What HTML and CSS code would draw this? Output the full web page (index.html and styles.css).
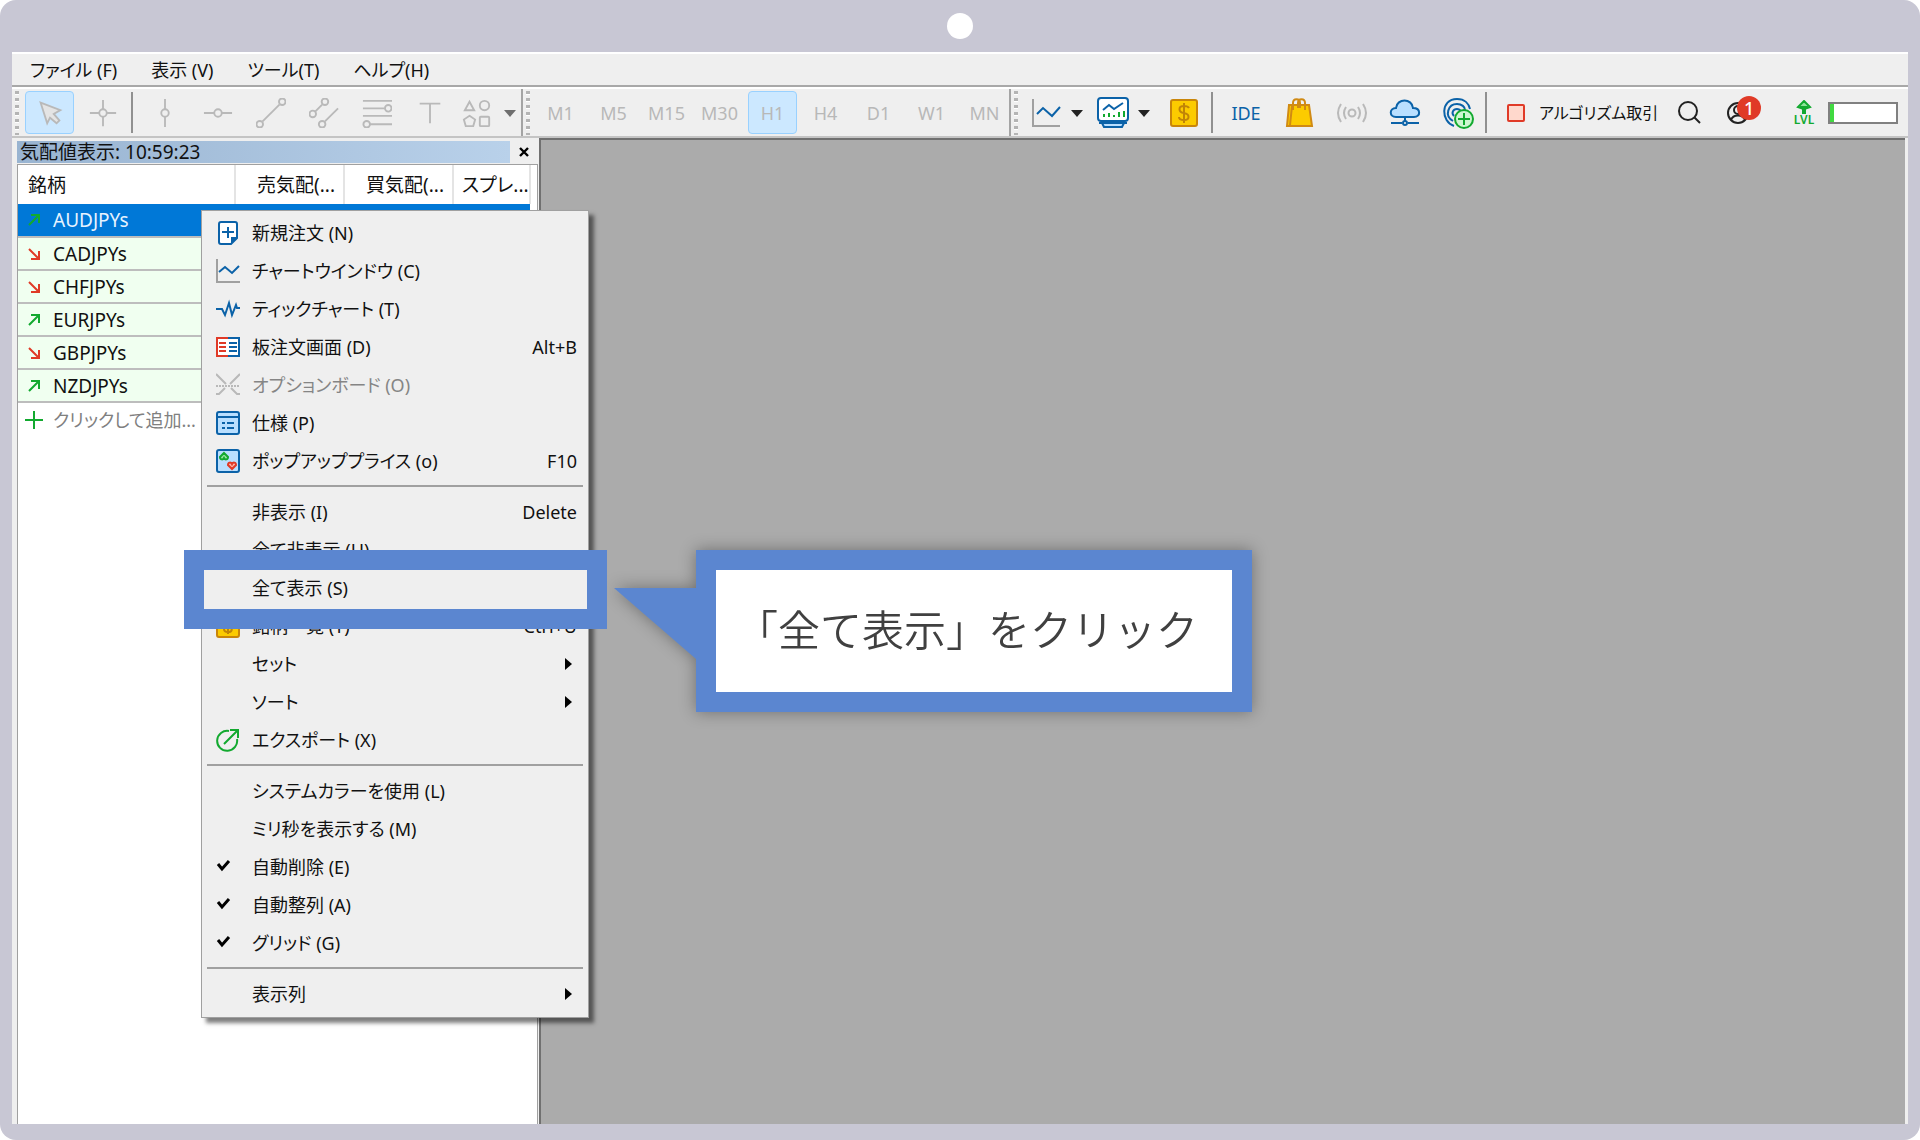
FILE: index.html
```html
<!DOCTYPE html>
<html lang="ja">
<head>
<meta charset="utf-8">
<title>気配値表示</title>
<meta name="viewport" content="width=device-width, initial-scale=1">
<link rel="stylesheet" href="styles.css">
</head>
<body>
<div class="frame">
  <div class="frame-top"><span class="camera"></span></div>
  <div class="window">
    <nav class="menubar">
      <button class="menubar-item">ファイル (F)</button>
      <button class="menubar-item">表示 (V)</button>
      <button class="menubar-item">ツール(T)</button>
      <button class="menubar-item">ヘルプ(H)</button>
    </nav>
    <div class="toolbar">
      <div class="group drawing">
        <span class="grip"></span>
        <button class="tool active" aria-label="カーソル"><svg class="icon dim" viewBox="0 0 32 32"><path fill="#e4e4e4" d="M6 5l21 8-7 4 6 7-3 3-7-6-3 6z"/></svg></button>
        <button class="tool" aria-label="十字線"><svg class="icon dim" viewBox="0 0 32 32"><path d="M16 2v10M16 20v10M2 16h10M20 16h10"/><circle cx="16" cy="16" r="4"/></svg></button>
        <span class="rule"></span>
        <button class="tool" aria-label="垂直線"><svg class="icon dim" viewBox="0 0 32 32"><path d="M16 1v11M16 20v11"/><circle cx="16" cy="16" r="4"/></svg></button>
        <button class="tool" aria-label="水平線"><svg class="icon dim" viewBox="0 0 32 32"><path d="M1 16h11M20 16h11"/><circle cx="16" cy="16" r="4"/></svg></button>
        <button class="tool" aria-label="トレンドライン"><svg class="icon dim" viewBox="0 0 32 32"><path d="M7 25L25 7"/><circle cx="4" cy="28" r="3.5"/><circle cx="28" cy="4" r="3.5"/></svg></button>
        <button class="tool" aria-label="チャネル"><svg class="icon dim" viewBox="0 0 32 32"><path d="M6 15L14 7M17 25L31 11"/><circle cx="4" cy="17" r="3.5"/><circle cx="17" cy="4" r="3.5"/><circle cx="14" cy="28" r="3.5"/></svg></button>
        <button class="tool" aria-label="フィボナッチ"><svg class="icon dim" viewBox="0 0 32 32"><path d="M1 3h31M1 11h23M1 19h31M8 28h24"/><circle cx="28" cy="11" r="3.5"/><circle cx="5" cy="28" r="3.5"/></svg></button>
        <button class="tool" aria-label="テキスト"><svg class="icon dim" viewBox="0 0 32 32"><path d="M5 6h22M16 6v21"/></svg></button>
        <button class="tool shapes" aria-label="図形"><svg class="icon dim" viewBox="0 0 32 32"><path d="M8 4l5 9H3z"/><circle cx="24" cy="8" r="5"/><path d="M8 19l6 4-2 7H4l-2-7z"/><rect x="19" y="20" width="10" height="10" rx="1"/></svg><svg class="caret" viewBox="0 0 12 8"><path fill="#6e6e6e" d="M0 1h12L6 8z"/></svg></button>
      </div>
      <div class="group frames">
        <span class="grip"></span>
        <button class="tool">M1</button>
        <button class="tool">M5</button>
        <button class="tool">M15</button>
        <button class="tool">M30</button>
        <button class="tool active">H1</button>
        <button class="tool">H4</button>
        <button class="tool">D1</button>
        <button class="tool">W1</button>
        <button class="tool">MN</button>
      </div>
      <div class="group actions">
        <span class="grip"></span>
        <button class="pair" aria-label="ラインチャート"><svg class="icon" viewBox="0 0 32 32"><path class="axis" d="M3 2v27h27"/><path class="blue" d="M7 17l6-6 9 8 8-9"/></svg><svg class="caret" viewBox="0 0 12 8"><path fill="#222" d="M0 1h12L6 8z"/></svg></button>
        <button class="pair" aria-label="インジケータ"><svg class="icon" viewBox="0 0 32 32"><rect class="blue" x="1" y="1" width="30" height="23" rx="3" fill="#fff"/><path class="blue" d="M2 26h28M5 26l2 4h18l2-4" fill="#b9dfff"/><path class="blue" d="M6 13l6-5 5 4 9-6"/><path d="M7 20v-3M12 20v-4M17 20v-2M22 20v-5M27 20v-6" stroke="#12a92f" stroke-width="2"/></svg><svg class="caret" viewBox="0 0 12 8"><path fill="#222" d="M0 1h12L6 8z"/></svg></button>
        <button class="single symbols" aria-label="銘柄"><svg class="icon" viewBox="0 0 32 32"><rect x="3" y="3" width="26" height="26" rx="2" fill="#fccb00" stroke="#c9860a" stroke-width="2"/><path d="M21 11c-1-2-3-2-5-2-6 0-6 6 0 7s6 7 0 7c-3 0-5-1-5-3M16 6v20" fill="none" stroke="#c08407" stroke-width="2"/></svg></button>
        <span class="rule"></span>
        <div class="services">
          <button class="single ide">IDE</button>
          <button class="single" aria-label="マーケット"><svg class="icon" viewBox="0 0 32 32"><path d="M6 8h20l3 21H4z" fill="#fccb00" stroke="#d08a14" stroke-width="2"/><path d="M9 9L7 28M10 13V6c0-5 7-5 7 0v5M15 11V6c0-5 7-5 7 0v7" fill="none" stroke="#d08a14" stroke-width="2"/></svg></button>
          <button class="single" aria-label="シグナル"><svg class="icon dim" viewBox="0 0 32 32"><circle cx="16" cy="16" r="3.5"/><path d="M10 10q-4 6 0 12M22 10q4 6 0 12M5 7q-6 9 0 18M27 7q6 9 0 18"/></svg></button>
          <button class="single" aria-label="VPS"><svg class="icon" viewBox="0 0 32 32"><path class="blue" fill="#b9dfff" d="M7 20c-7 0-7-9 0-9 1-10 16-10 17 0 8 0 8 9 1 9z"/><path class="blue" d="M16 20v4M2 26h11M19 26h11"/><circle class="blue" cx="16" cy="26" r="2"/></svg></button>
          <button class="single" aria-label="コピー"><svg class="icon" viewBox="0 0 32 32"><path class="blue" d="M12 29C-1 25-2 2 15 2c8 0 12 5 13 10M11 24C2 19 6 7 15 7c5 0 8 3 8 6M12 19c-3-3-1-7 3-7 2 0 3 1 4 2"/><circle cx="22" cy="22" r="9" fill="#cdf7d0" stroke="#12a92f" stroke-width="2"/><path d="M22 16v12M16 22h12" stroke="#12a92f" stroke-width="2"/></svg></button>
        </div>
        <span class="rule"></span>
        <button class="algo"><span class="stop"></span>アルゴリズム取引</button>
        <button class="single" aria-label="検索"><svg class="icon" viewBox="0 0 32 32"><circle cx="15" cy="14" r="9" fill="none" stroke="#222" stroke-width="2"/><path d="M21 20l6 6" stroke="#222" stroke-width="2"/></svg></button>
        <button class="single account" aria-label="アカウント"><svg class="icon" viewBox="0 0 32 32"><g fill="none" stroke="#222" stroke-width="2"><circle cx="14" cy="16" r="10"/><circle cx="14" cy="13" r="4"/><path d="M7 23c2-6 12-6 14 0"/></g></svg><span class="badge">1</span></button>
        <div class="level"><svg viewBox="0 0 16 14"><path d="M8 1l6 6-3 1V7H9v6H7V7H5v1L2 7z" fill="#8ee49a" stroke="#12a92f" stroke-width="2"/></svg><span>LVL</span></div>
        <div class="gauge"><span></span></div>
      </div>
    </div>
    <div class="workspace">
      <aside class="panel">
        <header class="panel-head"><h1 class="panel-title">気配値表示: 10:59:23</h1><button class="panel-close" aria-label="閉じる"><svg viewBox="0 0 10 10"><path d="M1 1l8 8M9 1L1 9" stroke="#000" stroke-width="2.4"/></svg></button></header>
        <div class="list">
          <table class="quotes">
            <colgroup><col class="c-name"><col class="c-price"><col class="c-price"><col class="c-spread"></colgroup>
            <thead><tr><th>銘柄</th><th>売気配(...</th><th>買気配(...</th><th>スプレ...</th></tr></thead>
            <tbody>
              <tr class="selected"><td><svg class="dir up" viewBox="0 0 14 14"><path d="M2 12L12 2M4 2h8v8"/></svg>AUDJPYs</td><td></td><td></td><td></td></tr>
              <tr><td><svg class="dir down" viewBox="0 0 14 14"><path d="M2 2l10 10M4 12h8V4"/></svg>CADJPYs</td><td></td><td></td><td></td></tr>
              <tr><td><svg class="dir down" viewBox="0 0 14 14"><path d="M2 2l10 10M4 12h8V4"/></svg>CHFJPYs</td><td></td><td></td><td></td></tr>
              <tr><td><svg class="dir up" viewBox="0 0 14 14"><path d="M2 12L12 2M4 2h8v8"/></svg>EURJPYs</td><td></td><td></td><td></td></tr>
              <tr><td><svg class="dir down" viewBox="0 0 14 14"><path d="M2 2l10 10M4 12h8V4"/></svg>GBPJPYs</td><td></td><td></td><td></td></tr>
              <tr><td><svg class="dir up" viewBox="0 0 14 14"><path d="M2 12L12 2M4 2h8v8"/></svg>NZDJPYs</td><td></td><td></td><td></td></tr>
            </tbody>
          </table>
          <button class="add"><svg viewBox="0 0 18 18"><path d="M9 0v18M0 9h18" stroke="#12a92f" stroke-width="2"/></svg>クリックして追加...</button>
        </div>
      </aside>
      <main class="charts"></main>
    </div>

    <div class="context" role="menu">
      <button class="item" role="menuitem"><svg class="mi" viewBox="0 0 24 24"><path class="blue" fill="#fff" d="M5 1h14a2 2 0 0 1 2 2v14l-6 6H5a2 2 0 0 1-2-2V3a2 2 0 0 1 2-2z"/><path d="M21 16v1l-6 6v-7z" fill="#0b62a8"/><path class="blue" d="M12 6v11M6 11h12"/></svg><span>新規注文 (N)</span></button>
      <button class="item" role="menuitem"><svg class="mi" viewBox="0 0 24 24"><path class="axis" d="M1 0v23h23"/><path class="blue" d="M3 13l6-5 7 6 7-7"/></svg><span>チャートウインドウ (C)</span></button>
      <button class="item" role="menuitem"><svg class="mi" viewBox="0 0 24 24"><path class="blue" d="M0 12h6l3 6 4-12 3 12 4-10 1 3h3"/></svg><span>ティックチャート (T)</span></button>
      <button class="item" role="menuitem"><svg class="mi" viewBox="0 0 24 24"><path d="M12 3H1v18h11" fill="#fff" stroke="#e03a27" stroke-width="2"/><path class="blue" d="M12 3h11v18H12" fill="#fff"/><path d="M3 8h7M3 12h7M3 16h7" stroke="#e03a27" stroke-width="2"/><path class="blue" d="M13 8h8M13 12h8M13 16h8"/></svg><span>板注文画面 (D)</span><kbd>Alt+B</kbd></button>
      <button class="item disabled" role="menuitem" disabled><svg class="mi dim" viewBox="0 0 24 24"><path d="M0 1l10 10M24 1L14 11M9 15l-6 6H0M15 15l6 6h3"/><path d="M0 13h24" stroke-dasharray="2 1"/></svg><span>オプションボード (O)</span></button>
      <button class="item" role="menuitem"><svg class="mi" viewBox="0 0 24 24"><rect class="blue" x="1" y="1" width="22" height="22" rx="2" fill="#b9dfff"/><path class="blue" d="M1 6h22M6 12h3M11 12h7M6 17h3M11 17h7"/></svg><span>仕様 (P)</span></button>
      <button class="item" role="menuitem"><svg class="mi" viewBox="0 0 24 24"><rect class="blue" x="1" y="1" width="22" height="22" rx="2" fill="#b9dfff"/><path d="M8 4l4 4c0 3-3 3-4 1-1 2-4 2-4-1z" fill="#9be8a4" stroke="#12a92f" stroke-width="2"/><path d="M16 20l-4-4c0-3 3-3 4-1 1-2 4-2 4 1z" fill="#ffb3a8" stroke="#e03a27" stroke-width="2"/></svg><span>ポップアッププライス (o)</span><kbd>F10</kbd></button>
      <hr>
      <button class="item" role="menuitem"><i class="mi"></i><span>非表示 (I)</span><kbd>Delete</kbd></button>
      <button class="item" role="menuitem"><i class="mi"></i><span>全て非表示 (H)</span></button>
      <button class="item marked" role="menuitem"><i class="mi"></i><span>全て表示 (S)</span></button>
      <button class="item" role="menuitem"><svg class="mi" viewBox="0 0 24 24"><rect x="1" y="1" width="22" height="22" rx="2" fill="#fccb00" stroke="#c9860a" stroke-width="2"/><path d="M16 8c-1-2-3-2-4-2-5 0-5 5 0 6s5 6 0 6c-2 0-4-1-4-3M12 4v16" fill="none" stroke="#c08407" stroke-width="2"/></svg><span>銘柄一覧 (Y)</span><kbd>Ctrl+U</kbd></button>
      <button class="item" role="menuitem"><i class="mi"></i><span>セット</span><svg class="sub" viewBox="0 0 7 12"><path d="M0 0l7 6-7 6z"/></svg></button>
      <button class="item" role="menuitem"><i class="mi"></i><span>ソート</span><svg class="sub" viewBox="0 0 7 12"><path d="M0 0l7 6-7 6z"/></svg></button>
      <button class="item" role="menuitem"><svg class="mi" viewBox="0 0 24 24"><path d="M13 3a10 10 0 1 0 8 8M8 16L22 2M14 2h8v8" fill="none" stroke="#12a92f" stroke-width="2"/></svg><span>エクスポート (X)</span></button>
      <hr>
      <button class="item" role="menuitem"><i class="mi"></i><span>システムカラーを使用 (L)</span></button>
      <button class="item" role="menuitem"><i class="mi"></i><span>ミリ秒を表示する (M)</span></button>
      <button class="item" role="menuitemcheckbox" aria-checked="true"><svg class="mi" viewBox="0 0 24 24"><path class="tick" d="M2 9l4 5 7-8"/></svg><span>自動削除 (E)</span></button>
      <button class="item" role="menuitemcheckbox" aria-checked="true"><svg class="mi" viewBox="0 0 24 24"><path class="tick" d="M2 9l4 5 7-8"/></svg><span>自動整列 (A)</span></button>
      <button class="item" role="menuitemcheckbox" aria-checked="true"><svg class="mi" viewBox="0 0 24 24"><path class="tick" d="M2 9l4 5 7-8"/></svg><span>グリッド (G)</span></button>
      <hr>
      <button class="item" role="menuitem"><i class="mi"></i><span>表示列</span><svg class="sub" viewBox="0 0 7 12"><path d="M0 0l7 6-7 6z"/></svg></button>
    </div>

    <div class="callout"><svg class="tail" viewBox="0 0 82 71"><path d="M0 0h82v71z" fill="#5b86d0"/></svg><p>「全て表示」をクリック</p></div>
  </div>
</div>
</body>
</html>
```

FILE: styles.css
```css
* { box-sizing: border-box; }
body { margin: 0; background: #fff; color: #111; font: 18px/24px "Noto Sans", "Noto Sans CJK JP", sans-serif; font-feature-settings: "palt"; }
button { margin: 0; padding: 0; border: 0; background: none; color: inherit; font: inherit; font-feature-settings: inherit; white-space: nowrap; }
svg { display: block; flex: none; }

.frame { display: flex; flex-direction: column; min-height: 100vh; padding: 0 12px 16px; background: #c8c7d4; border-radius: 16px; }
.frame-top { display: flex; justify-content: center; align-items: center; height: 52px; }
.camera { width: 26px; height: 26px; border-radius: 50%; background: #fff; }
.window { position: relative; flex: 1; display: flex; flex-direction: column; border-top: 2px solid #fff; background: #efefef; }

.menubar { display: flex; gap: 34px; height: 33px; padding: 0 18px; border-bottom: 2px solid #a8a8a8; }
.toolbar { display: flex; height: 51px; border-top: 2px solid #fff; border-bottom: 2px solid #c4c4c4; }
.group { display: flex; align-items: center; gap: 4px; border-right: 2px solid #a4a4a4; }
.grip { width: 4px; height: 44px; margin: 0 2px 0 3px; background: repeating-linear-gradient(#b4b4b4 0 3px, #fff 3px 4px, #efefef 4px 7px); }
.tool { display: flex; align-items: center; justify-content: center; width: 49px; height: 43px; border: 1px solid transparent; border-radius: 4px; color: #b8b8b8; }
.tool.active { background: #cce8ff; border-color: #99d1ff; }
.tool.shapes { width: 62px; gap: 12px; margin-right: 1px; }
.rule { width: 2px; height: 41px; background: #909090; }
.drawing .rule { margin-right: 3px; }
.icon { width: 32px; height: 32px; }
.tool .icon { width: 30px; height: 30px; }
.caret { width: 12px; height: 8px; }
.dim { fill: none; stroke: #b9b9b9; stroke-width: 2; }
.blue { stroke: #0b62a8; stroke-width: 2; }
.blue:not([fill]) { fill: none; }
.axis { fill: none; stroke: #a0a0a0; stroke-width: 2; }

.actions { flex: 1; gap: 0; border-right: 0; padding-right: 10px; }
.actions .grip { margin-right: 12px; }
.pair { display: flex; align-items: center; gap: 9px; margin-right: 14px; }
.symbols { margin-left: 4px; }
.single { display: flex; align-items: center; justify-content: center; width: 32px; height: 40px; }
.actions .rule { margin: 0 13px 0 11px; }
.services { display: flex; gap: 21px; padding-left: 4px; }
.ide { color: #0b62a8; }
.algo { display: flex; align-items: center; gap: 14px; margin: 0 15px 0 7px; font-size: 16px; }
.stop { width: 18px; height: 18px; border: 2px solid #e03a27; border-radius: 2px; background: #ffd8cc; }
.account { position: relative; margin-left: 19px; }
.badge { position: absolute; left: 13px; top: 3px; width: 24px; height: 24px; border-radius: 50%; background: #e03a27; color: #fff; font-weight: 500; text-align: center; }
.level { display: flex; flex-direction: column; align-items: center; width: 24px; margin-left: auto; color: #12a92f; font-size: 12px; line-height: 12px; font-weight: 600; }
.level svg { width: 16px; height: 14px; }
.gauge { width: 70px; height: 22px; margin-left: 12px; border: 2px solid #808080; background: #fff; }
.gauge span { display: block; width: 4px; height: 100%; background: #41d941; }

.workspace { flex: 1; display: flex; padding-right: 3px; }
.panel { flex: none; display: flex; flex-direction: column; width: 527px; padding: 3px 1px 0 5px; }
.panel-head { display: flex; align-items: center; height: 22px; }
.panel-title { flex: 1; margin: 0; padding-left: 3px; background: linear-gradient(90deg, #99b4d1, #b9d1ea); font-size: 19px; line-height: 22px; font-weight: 400; }
.panel-close { display: flex; justify-content: center; width: 28px; }
.panel-close svg { width: 10px; height: 10px; }
.list { flex: 1; margin-top: 1px; padding-right: 6px; border: 1px solid #a0a0a0; border-bottom: 0; background: #fff; }
.quotes { width: 100%; table-layout: fixed; border-collapse: collapse; font-size: 19px; }
.c-name { width: 217px; }
.c-price { width: 109px; }
.quotes th { height: 39px; padding: 0 8px; border-right: 2px solid #e4e4e4; font-weight: 400; text-align: right; white-space: nowrap; }
.quotes th:first-child { padding-left: 10px; text-align: left; }
.quotes td { height: 33px; padding: 0; border-bottom: 2px solid #bdbdbd; background: #f0fff0; white-space: nowrap; }
.quotes .selected td { background: #0078d7; color: #e6f3ff; }
.dir { display: inline-block; width: 14px; height: 14px; margin: 0 12px 0 9px; fill: none; stroke-width: 2; }
.up { stroke: #12a92f; }
.down { stroke: #e03a27; }
.add { display: flex; align-items: center; gap: 10px; height: 33px; padding-left: 7px; color: #808080; }
.add svg { width: 18px; height: 18px; }
.charts { flex: 1; border: solid #707070; border-width: 2px 0 0 2px; background: #ababab; }

.context { position: absolute; left: 189px; top: 156px; width: 388px; padding: 3px 0 4px; border: 1px solid #a0a0a0; background: #efefef; box-shadow: 5px 5px 4px rgba(0, 0, 0, .5); }
.item { display: flex; align-items: center; gap: 12px; width: 100%; height: 38px; padding: 0 11px 0 14px; text-align: left; }
.item.disabled { color: #858585; }
.item span { flex: 1; }
.item kbd { font: inherit; }
.mi { flex: none; width: 24px; height: 24px; }
.sub { width: 7px; height: 12px; margin-right: 5px; }
.tick { fill: none; stroke: #000; stroke-width: 3; }
.context hr { height: 13px; margin: 0 5px; border: solid transparent; border-width: 5px 0 6px; background: linear-gradient(#a0a0a0, #a0a0a0) padding-box; }
.marked { position: relative; z-index: 1; }
.marked::after { content: ""; position: absolute; inset: -19px -19px -22px -18px; border: 20px solid #5b86d0; }

.callout { position: absolute; left: 684px; top: 496px; display: flex; align-items: center; height: 162px; padding: 0 34px 6px 20px; border: 20px solid #5b86d0; background: #fff; color: #404040; filter: drop-shadow(0 0 8px rgba(0, 0, 0, .35)); }
.callout p { margin: 0; font: 350 42px/60px "Noto Sans CJK JP", sans-serif; font-feature-settings: normal; white-space: nowrap; }
.tail { position: absolute; left: -102px; top: 18px; width: 82px; height: 71px; }
```
